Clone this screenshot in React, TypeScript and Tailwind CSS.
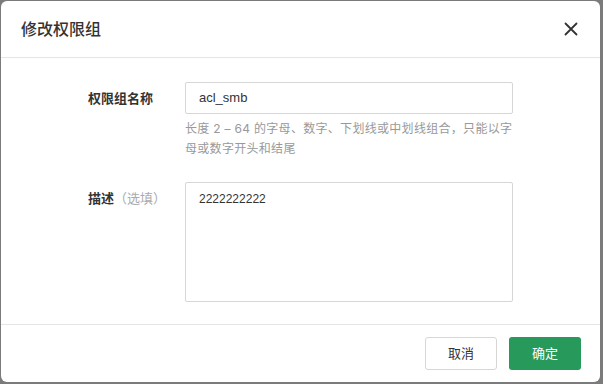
const font = "font-['Inter','Noto_Sans_CJK_SC',sans-serif]";

export default function App() {
  return (
    <div className={`h-[384px] w-[603px] bg-[#7b7b7b] pl-px pt-px pr-[3px] pb-[2px] ${font}`}>
      <div className="flex h-full flex-col rounded-[6px] bg-white">
        {/* Header */}
        <div className="flex h-[57px] items-center justify-between border-b border-[#e5e5e5] pl-[20px] pr-[22px]">
          <h1 className="text-[16px] font-medium text-[#333]">修改权限组</h1>
          <svg width="14" height="14" viewBox="0 0 14 14" className="text-[#333]">
            <path d="M1.5 1.5L12.5 12.5M12.5 1.5L1.5 12.5" stroke="currentColor" strokeWidth="1.8" strokeLinecap="round" />
          </svg>
        </div>

        {/* Body */}
        <div className="flex flex-1 flex-col gap-[23px] border-b border-[#e5e5e5] pt-[24px]">
          <div className="flex">
            <label className="w-[97px] shrink-0 pl-[87px] pt-[7px] text-[13px] font-bold text-[#333] box-content">
              权限组名称
            </label>
            <div className="w-[328px]">
              <div className="flex h-[32px] items-center rounded-[2px] border border-[#d6d6d6] px-[13px] font-['Liberation_Sans','Noto_Sans_CJK_SC',sans-serif] text-[13px] text-[#333]">
                acl_smb
              </div>
              <p className="mt-[5px] text-[12px] leading-[20px] tracking-[0.3px] text-[#999]">
                长度 2 – 64 的字母、数字、下划线或中划线组合，只能以字母或数字开头和结尾
              </p>
            </div>
          </div>
          <div className="flex">
            <label className="w-[97px] shrink-0 pl-[87px] pt-[7px] text-[13px] text-[#333] box-content">
              <span className="font-bold">描述</span>
              <span className="text-[#aaa]">（选填）</span>
            </label>
            <div className="h-[120px] w-[328px] rounded-[2px] border border-[#d6d6d6] px-[13px] py-[7px] font-['Liberation_Sans','Noto_Sans_CJK_SC',sans-serif] text-[12px] text-[#333]">
              2222222222
            </div>
          </div>
        </div>

        {/* Footer */}
        <div className="flex h-[57px] items-center justify-end gap-[12px] pr-[19px]">
          <button className="h-[33px] w-[72px] rounded-[3px] border border-[#d6d6d6] bg-white text-[13px] text-[#333]">
            取消
          </button>
          <button className="h-[33px] w-[72px] rounded-[3px] bg-[#27995b] text-[13px] text-white">
            确定
          </button>
        </div>
      </div>
    </div>
  );
}
